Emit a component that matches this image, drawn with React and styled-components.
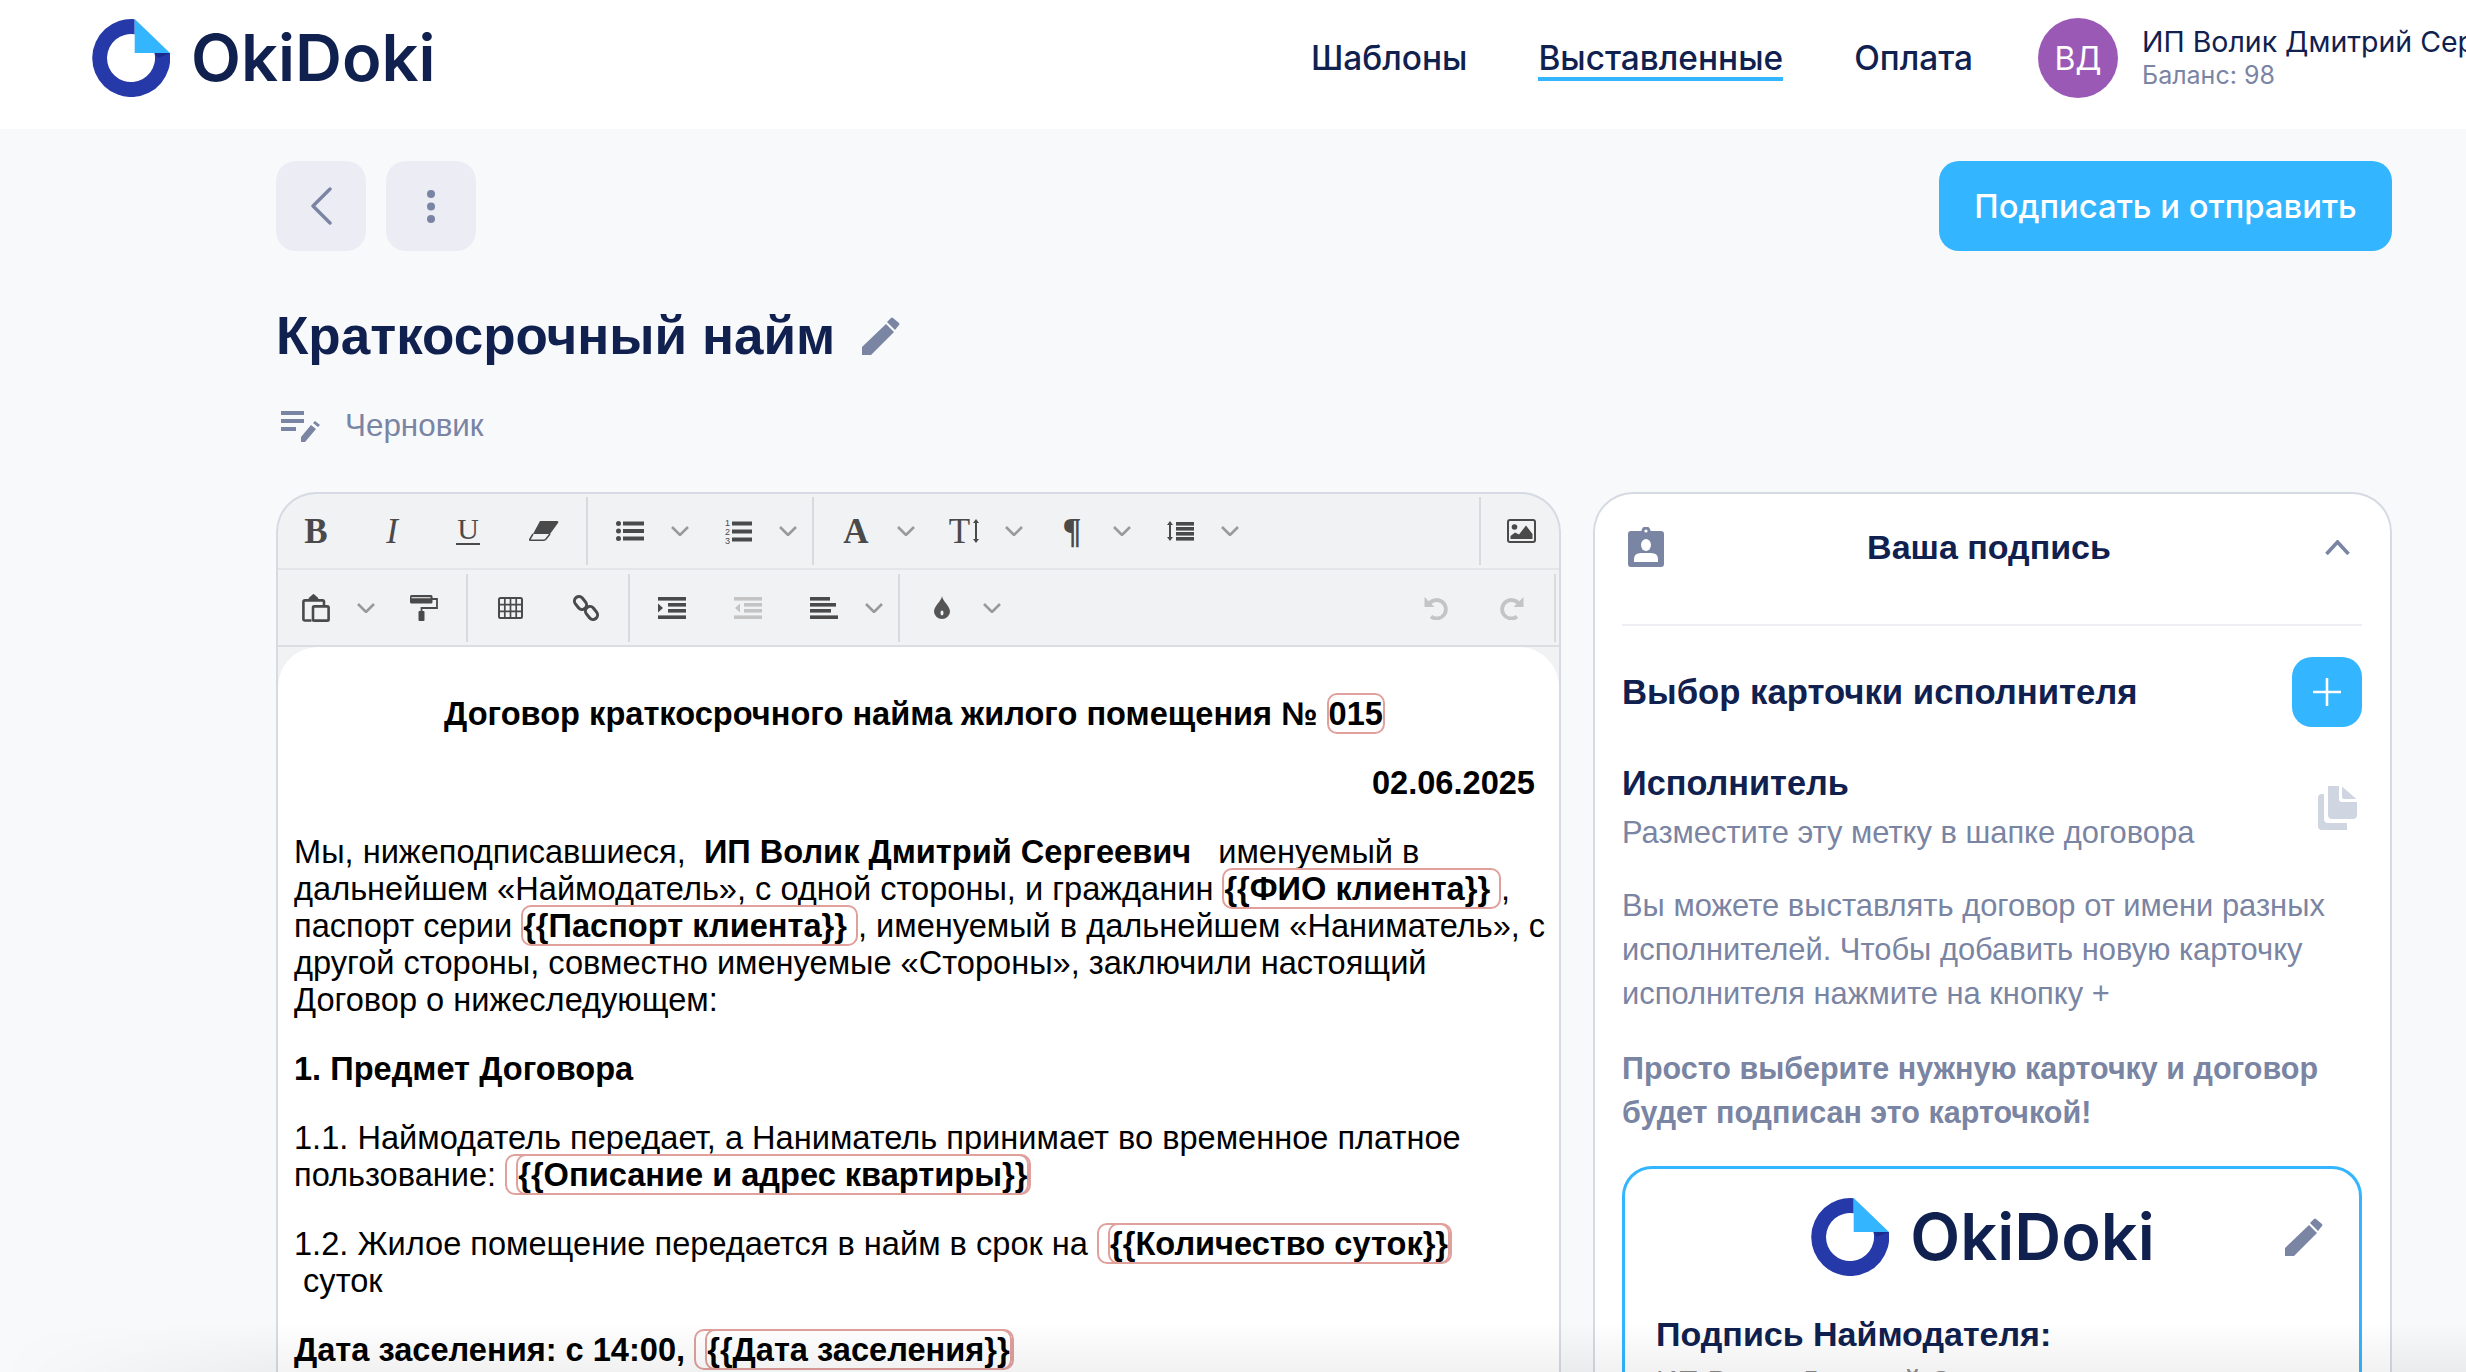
import React from 'react'
import styled, { createGlobalStyle } from 'styled-components'

const navy = '#10214f'
const slate = '#7a84a3'
const sky = '#33b5ff'
const ink = '#4a4a4a'
const faded = '#c4c4c4'

const GlobalStyle = createGlobalStyle`
  html, body {
    margin: 0;
    height: 100%;
    overflow: hidden;
    background: #f8f9fb;
    font-family: 'Liberation Sans', Arial, sans-serif;
  }
`

const Page = styled.div`
  height: 1372px;
  overflow: hidden;
`

const BottomFade = styled.div`
  position: fixed;
  left: 0;
  right: 0;
  bottom: 0;
  height: 50px;
  pointer-events: none;
  background: linear-gradient(to bottom, rgba(0, 0, 0, 0), rgba(0, 0, 0, 0.055));
  mask-image: linear-gradient(to right, transparent, black 340px);
`

const Header = styled.header`
  height: 129px;
  box-sizing: border-box;
  padding: 0 0 13px 92px;
  background: #fff;
  display: flex;
  align-items: center;
  overflow: hidden;
`

const Brand = styled.div`
  display: flex;
  align-items: center;
  gap: 21px;
`

const BrandName = styled.span`
  font-family: Inter, sans-serif;
  font-weight: 600;
  font-size: 65px;
  line-height: 78px;
  color: ${navy};
`

const Nav = styled.nav`
  margin-left: auto;
  margin-right: 65px;
  display: flex;
  gap: 71px;
`

const NavLink = styled.a`
  padding-top: 4px;
  font-family: Inter, sans-serif;
  font-weight: 500;
  font-size: 33.4px;
  line-height: 38px;
  color: ${navy};
  border-bottom: 4px solid ${(p) => (p.$active ? sky : 'transparent')};
`

const User = styled.div`
  flex: 0 0 428px;
  display: flex;
  align-items: center;
  gap: 24px;
  white-space: nowrap;
  overflow: hidden;
`

const Avatar = styled.div`
  flex: 0 0 80px;
  height: 80px;
  border-radius: 50%;
  background: #9b59b6;
  color: #fff;
  font-family: Inter, sans-serif;
  font-size: 32px;
  display: flex;
  align-items: center;
  justify-content: center;
`

const UserName = styled.div`
  font-family: Inter, sans-serif;
  font-size: 28.5px;
  line-height: 34px;
  color: ${navy};
`

const Balance = styled.div`
  font-family: Inter, sans-serif;
  font-size: 25px;
  line-height: 32px;
  color: ${slate};
`

const Main = styled.main`
  padding: 32px 74px 0 276px;
`

const TopBar = styled.div`
  display: flex;
  justify-content: space-between;
`

const IconGroup = styled.div`
  display: flex;
  gap: 20px;
`

const SquareButton = styled.button`
  width: 90px;
  height: 90px;
  border: 0;
  border-radius: 20px;
  background: #ecedf4;
  display: flex;
  align-items: center;
  justify-content: center;
`

const PrimaryButton = styled.button`
  width: 453px;
  height: 90px;
  border: 0;
  border-radius: 20px;
  background: ${sky};
  color: #fff;
  font-family: Inter, sans-serif;
  font-weight: 500;
  font-size: 32.8px;
`

const TitleRow = styled.div`
  margin-top: 54px;
  display: flex;
  align-items: center;
  gap: 27px;
`

const Title = styled.h1`
  margin: 0;
  font-size: 53px;
  line-height: 62px;
  font-weight: 700;
  color: ${navy};
`

const Status = styled.div`
  margin-top: 39px;
  padding-left: 5px;
  display: flex;
  align-items: center;
  gap: 25px;
  font-size: 31.4px;
  line-height: 40px;
  color: ${slate};
`

const Columns = styled.div`
  margin-top: 46px;
  display: grid;
  grid-template-columns: 1285px 799px;
  gap: 32px;
  align-items: start;
`

const Editor = styled.section`
  border: 2px solid #d5dae3;
  border-bottom: 0;
  border-radius: 40px 40px 0 0;
  background: #f1f2f4;
  overflow: hidden;
  height: 900px;
`

const ToolRow = styled.div`
  height: ${(p) => p.$height}px;
  display: flex;
  align-items: center;
  border-bottom: 2px solid ${(p) => p.$line};
`

const ToolGroup = styled.div`
  height: 68px;
  display: flex;
  align-items: center;
  padding: 0 4px;
  border-right: 2px solid #d9dadd;
  &:first-child {
    padding-left: 0;
  }
`

const PlainGroup = styled.div`
  display: flex;
  align-items: center;
  padding-left: 4px;
`

const EndGroup = styled.div`
  height: 68px;
  margin-left: auto;
  margin-right: ${(p) => p.$right}px;
  display: flex;
  align-items: center;
  padding: ${(p) => p.$padding};
  border-${(p) => p.$side}: 2px solid #d9dadd;
`

const Tool = styled.span`
  flex: 0 0 76px;
  height: 60px;
  display: flex;
  align-items: center;
  justify-content: center;
  gap: 3px;
  color: ${ink};
  font-family: 'Liberation Serif', serif;
  font-size: 35px;
  line-height: 1;
  font-weight: ${(p) => (p.$bold ? 700 : 400)};
  font-style: ${(p) => (p.$italic ? 'italic' : 'normal')};
`

const UnderlinedGlyph = styled.span`
  display: block;
  width: 24px;
  text-align: center;
  font-size: 30px;
  line-height: 24px;
  padding-bottom: 2px;
  border-bottom: 2px solid ${ink};
`

const Caret = styled.span`
  flex: 0 0 24px;
  margin-right: 8px;
  display: flex;
  align-items: center;
  justify-content: center;
`

const Sheet = styled.div`
  background: #fff;
  border-radius: 40px 40px 0 0;
  padding: 16px 12px 0 16px;
  height: 800px;
  color: #000;
  font-size: 32.6px;
  line-height: 37px;
`

const Para = styled.p`
  margin: 32px 0;
  padding-right: ${(p) => p.$inset || 0}px;
  text-align: ${(p) => p.$align || 'left'};
  font-weight: ${(p) => (p.$bold ? 700 : 400)};
`

const Tag = styled.span`
  font-weight: 700;
  border: 2px solid #e0a09c;
  border-radius: 10px;
`

const Panel = styled.aside`
  border: 2px solid #d5dae3;
  border-bottom: 0;
  border-radius: 40px 40px 0 0;
  background: #fff;
  padding: 0 28px 0 27px;
  height: 900px;
`

const PanelHead = styled.div`
  height: 132px;
  box-sizing: border-box;
  padding: 0 12px 24px 6px;
  border-bottom: 2px solid #eeeff4;
  display: grid;
  grid-template-columns: 40px 1fr 40px;
  align-items: center;
`

const PanelTitle = styled.h2`
  margin: 0;
  font-size: 34px;
  text-align: center;
  color: ${navy};
`

const ChevronCell = styled.div`
  display: flex;
  justify-content: flex-end;
`

const PickRow = styled.div`
  margin-top: 31px;
  display: flex;
  align-items: center;
  justify-content: space-between;
`

const SectionTitle = styled.h3`
  margin: 0;
  font-size: ${(p) => p.$size}px;
  line-height: 44px;
  font-weight: 700;
  color: ${navy};
`

const PlusButton = styled.button`
  width: 70px;
  height: 70px;
  padding: 0;
  border: 0;
  border-radius: 20px;
  background: ${sky};
  display: flex;
  align-items: center;
  justify-content: center;
`

const ExecRow = styled.div`
  margin-top: 34px;
  padding-right: 5px;
  display: flex;
  align-items: center;
  justify-content: space-between;
`

const Hint = styled.p`
  margin: ${(p) => p.$margin};
  font-size: ${(p) => (p.$bold ? 30.5 : 30.9)}px;
  line-height: 44px;
  font-weight: ${(p) => (p.$bold ? 700 : 400)};
  color: ${slate};
`

const Card = styled.div`
  margin-top: 32px;
  border: 3px solid ${sky};
  border-bottom: 0;
  border-radius: 30px 30px 0 0;
  padding: 29px 0 0;
  height: 400px;
`

const CardTop = styled.div`
  padding: 0 36px 0 18px;
  display: grid;
  grid-template-columns: 1fr auto 1fr;
  align-items: center;
`

const CardEdit = styled.div`
  display: flex;
  justify-content: flex-end;
`

const CardBody = styled.div`
  margin-top: 38px;
  padding-left: 31px;
`

const SignTitle = styled.h3`
  margin: 0;
  font-size: 34px;
  line-height: 40px;
  color: ${navy};
`

const SignName = styled.div`
  margin-top: 7px;
  font-size: 30px;
  line-height: 40px;
  color: #8a8a8a;
`

const LogoMark = () => (
  <svg width="78" height="78" viewBox="0 0 78 78">
    <path d="M42.7 0.2A39 39 0 1 0 77.9 34L62.5 34A24 24 0 1 1 42.7 15.3Z" fill="#2639a8" />
    <path d="M62.5 34H78L66 39Z" fill="#1c2c8c" />
    <path d="M42.7 0L78 34H42.7Z" fill={sky} />
  </svg>
)

const Logo = () => (
  <Brand>
    <LogoMark />
    <BrandName>OkiDoki</BrandName>
  </Brand>
)

const Pencil = ({ size = 38 }) => (
  <svg width={size} height={size} viewBox="0 0 38 38" fill={slate}>
    <path d="M0 38V30L24 7L32 15L9 38Z" />
    <path d="M25 5L29 1Q30 0 31 1L37 6Q38 7 37 8L33 13Z" />
  </svg>
)

const Chevron = ({ up }) => (
  <svg width="18" height="10" viewBox="0 0 18 10" fill="none" stroke="#9a9a9a" strokeWidth="2.6">
    <path d={up ? 'M1 9L9 1L17 9' : 'M1 1L9 9L17 1'} />
  </svg>
)

const BackIcon = () => (
  <svg width="22" height="38" viewBox="0 0 22 38" fill="none" stroke={slate} strokeWidth="3.4" strokeLinecap="round" strokeLinejoin="round">
    <path d="M20 2L3 19L20 36" />
  </svg>
)

const DotsIcon = () => (
  <svg width="8" height="33" viewBox="0 0 8 33" fill={slate}>
    <circle cx="4" cy="4" r="4" />
    <circle cx="4" cy="16.5" r="4" />
    <circle cx="4" cy="29" r="4" />
  </svg>
)

const DraftIcon = () => (
  <svg width="39" height="32" viewBox="0 0 39 32" fill={slate}>
    <rect x="0" y="1" width="23" height="4" />
    <rect x="0" y="9" width="23" height="4" />
    <rect x="0" y="17" width="15" height="4" />
    <path d="M20 32V27L30 15L35 19L24 32Z" />
    <path d="M32 13L34 11L39 15L37 17Z" />
  </svg>
)

const Eraser = () => (
  <svg width="30" height="20" viewBox="0 0 30 20">
    <path d="M11 0H28Q30 0 29 2L21 13H4Z" fill={ink} />
    <path d="M4 13L1 18Q0 19.2 2 19.2H15Q16 19.2 17 18L21 13" fill="none" stroke={ink} strokeWidth="1.5" />
  </svg>
)

const ListIcon = () => (
  <svg width="28" height="20" viewBox="0 0 28 20" fill={ink}>
    <circle cx="2.5" cy="2.5" r="2.5" />
    <circle cx="2.5" cy="10" r="2.5" />
    <circle cx="2.5" cy="17.5" r="2.5" />
    <rect x="7" y="0.5" width="21" height="4" />
    <rect x="7" y="8" width="21" height="4" />
    <rect x="7" y="15.5" width="21" height="4" />
  </svg>
)

const OrderedIcon = () => (
  <svg width="27" height="27" viewBox="0 0 27 27" fill={ink}>
    <text x="0" y="8" fontSize="9" fontFamily="Liberation Sans, sans-serif">1</text>
    <text x="0" y="17" fontSize="9" fontFamily="Liberation Sans, sans-serif">2</text>
    <text x="0" y="26" fontSize="9" fontFamily="Liberation Sans, sans-serif">3</text>
    <rect x="7" y="3.5" width="20" height="4" />
    <rect x="7" y="11.5" width="20" height="4" />
    <rect x="7" y="19.5" width="20" height="4" />
  </svg>
)

const HeightArrow = () => (
  <svg width="6" height="24" viewBox="0 0 6 24" fill={ink}>
    <path d="M3 0L6 4H4V20H6L3 24L0 20H2V4H0Z" />
  </svg>
)

const LineHeightIcon = () => (
  <svg width="27" height="20" viewBox="0 0 27 20" fill={ink}>
    <path d="M3 0L6 4H4V16H6L3 20L0 16H2V4H0Z" />
    <rect x="9" y="1" width="18" height="3.6" />
    <rect x="9" y="6" width="18" height="3.6" />
    <rect x="9" y="11" width="18" height="3.6" />
    <rect x="9" y="16" width="18" height="3.6" />
  </svg>
)

const ImageIcon = () => (
  <svg width="29" height="24" viewBox="0 0 29 24">
    <rect x="1" y="1" width="27" height="22" rx="2" fill="none" stroke={ink} strokeWidth="2" />
    <circle cx="7.5" cy="8" r="2.8" fill={ink} />
    <path d="M3.5 20V17L8 13.5L12 15.5L19 6.5L25.5 15V20Z" fill={ink} />
  </svg>
)

const PasteIcon = () => (
  <svg width="28" height="28" viewBox="0 0 28 28" fill="none" stroke={ink} strokeWidth="2.6">
    <path d="M9.5 26.5H3Q1.4 26.5 1.4 25V8Q1.4 6.4 3 6.4H20.5Q22 6.4 22 8V12" />
    <path d="M8 6V4.5L11.5 1.5L15 4.5V6" fill={ink} />
    <rect x="11" y="12.4" width="15.6" height="14.2" rx="1.2" />
  </svg>
)

const RollerIcon = () => (
  <svg width="28" height="26" viewBox="0 0 28 26">
    <rect x="0" y="0" width="22.5" height="8.5" rx="1.5" fill={ink} />
    <rect x="1.5" y="2" width="19" height="1.3" fill="#cfcfcf" />
    <path d="M22 4H27V13H11.5V17" fill="none" stroke={ink} strokeWidth="1.8" />
    <rect x="8.5" y="16" width="6" height="10" rx="1" fill={ink} />
  </svg>
)

const TableIcon = () => (
  <svg width="25" height="22" viewBox="0 0 25 22" fill="none" stroke={ink} strokeWidth="1.7">
    <rect x="1" y="1" width="23" height="20" rx="1.5" strokeWidth="2" />
    <path d="M6.8 1V21M12.5 1V21M18.2 1V21M1 7.6H24M1 14.3H24" />
  </svg>
)

const LinkIcon = () => (
  <svg width="26" height="26" viewBox="0 0 26 26" fill="none" stroke={ink} strokeWidth="3">
    <rect x="0.5" y="3.5" width="14" height="9" rx="4.5" transform="rotate(52 7.5 8)" />
    <rect x="11.5" y="13.5" width="14" height="9" rx="4.5" transform="rotate(52 18.5 18)" />
  </svg>
)

const IndentIcon = ({ out }) => (
  <svg width="28" height="22" viewBox="0 0 28 22" fill={out ? faded : ink}>
    <rect x="0" y="0" width="28" height="3.6" />
    <rect x="10" y="6" width="18" height="3.6" />
    <rect x="10" y="12" width="18" height="3.6" />
    <rect x="0" y="18.4" width="28" height="3.6" />
    <path d={out ? 'M1 11L6 6.5V15.5Z' : 'M5 11L0 6.5V15.5Z'} />
  </svg>
)

const AlignIcon = () => (
  <svg width="28" height="22" viewBox="0 0 28 22" fill={ink}>
    <rect x="0" y="0" width="20" height="3.6" />
    <rect x="0" y="6" width="26" height="3.6" />
    <rect x="0" y="12" width="21" height="3.6" />
    <rect x="0" y="18.4" width="28" height="3.6" />
  </svg>
)

const DropIcon = () => (
  <svg width="16" height="23" viewBox="0 0 16 23">
    <path d="M8 0C8.5 5 16 10 16 15.5A8 7.5 0 0 1 0 15.5C0 10 7.5 5 8 0Z" fill="#555" />
    <ellipse cx="8" cy="17" rx="1.5" ry="2.4" fill="#f1f2f4" />
  </svg>
)

const UndoIcon = ({ redo }) => (
  <svg width="24" height="24" viewBox="0 0 24 24" transform={redo ? 'scale(-1 1)' : undefined}>
    <path d="M4.5 9A9.2 9.2 0 1 1 7 20.5" fill="none" stroke={faded} strokeWidth="3.8" />
    <path d="M0.5 1V11H10.5Z" fill={faded} />
  </svg>
)

const BadgeIcon = () => (
  <svg width="36" height="40" viewBox="0 0 36 40">
    <path d="M3 4H13.5A4.5 4.5 0 0 1 22.5 4H33Q36 4 36 7V37Q36 40 33 40H3Q0 40 0 37V7Q0 4 3 4Z" fill={slate} />
    <circle cx="18" cy="4" r="1.6" fill="#fff" />
    <ellipse cx="18" cy="18" rx="5" ry="6" fill="#fff" />
    <path d="M6 35V32Q6 26 13 26H23Q30 26 30 32V35Z" fill="#fff" />
  </svg>
)

const CopyIcon = () => (
  <svg width="39" height="44" viewBox="0 0 39 44" fill="#d0d6e1">
    <path d="M10 0H21V13Q21 16 24 16H39V29Q39 33 35 33H14Q10 33 10 29Z" />
    <path d="M24 0.5L38.5 13H26Q24 13 24 11Z" />
    <path d="M6 8V33Q6 37 10 37H29V44H4Q0 44 0 40V12Q0 8 4 8Z" />
  </svg>
)

const PlusIcon = () => (
  <svg width="28" height="28" viewBox="0 0 28 28" fill="none" stroke="#fff" strokeWidth="2.6">
    <path d="M14 0V28M0 14H28" />
  </svg>
)

const App = () => (
  <Page>
    <GlobalStyle />
    <Header>
      <Logo />
      <Nav>
        <NavLink>Шаблоны</NavLink>
        <NavLink $active>Выставленные</NavLink>
        <NavLink>Оплата</NavLink>
      </Nav>
      <User>
        <Avatar>ВД</Avatar>
        <div>
          <UserName>ИП Волик Дмитрий Сергеевич</UserName>
          <Balance>Баланс: 98</Balance>
        </div>
      </User>
    </Header>

    <Main>
      <TopBar>
        <IconGroup>
          <SquareButton><BackIcon /></SquareButton>
          <SquareButton><DotsIcon /></SquareButton>
        </IconGroup>
        <PrimaryButton>Подписать и отправить</PrimaryButton>
      </TopBar>

      <TitleRow>
        <Title>Краткосрочный найм</Title>
        <Pencil />
      </TitleRow>

      <Status>
        <DraftIcon />
        Черновик
      </Status>

      <Columns>
        <Editor>
          <ToolRow $height={74} $line="#e4e5e9">
            <ToolGroup>
              <Tool $bold>B</Tool>
              <Tool $italic>I</Tool>
              <Tool><UnderlinedGlyph>U</UnderlinedGlyph></Tool>
              <Tool><Eraser /></Tool>
            </ToolGroup>
            <ToolGroup>
              <Tool><ListIcon /></Tool>
              <Caret><Chevron /></Caret>
              <Tool><OrderedIcon /></Tool>
              <Caret><Chevron /></Caret>
            </ToolGroup>
            <PlainGroup>
              <Tool $bold>A</Tool>
              <Caret><Chevron /></Caret>
              <Tool>T<HeightArrow /></Tool>
              <Caret><Chevron /></Caret>
              <Tool $bold>¶</Tool>
              <Caret><Chevron /></Caret>
              <Tool><LineHeightIcon /></Tool>
              <Caret><Chevron /></Caret>
            </PlainGroup>
            <EndGroup $right={0} $side="left" $padding="0 0 0 2px">
              <Tool><ImageIcon /></Tool>
            </EndGroup>
          </ToolRow>
          <ToolRow $height={75} $line="#dcdde1">
            <ToolGroup>
              <Tool><PasteIcon /></Tool>
              <Caret><Chevron /></Caret>
              <Tool><RollerIcon /></Tool>
            </ToolGroup>
            <ToolGroup>
              <Tool><TableIcon /></Tool>
              <Tool><LinkIcon /></Tool>
            </ToolGroup>
            <ToolGroup>
              <Tool><IndentIcon /></Tool>
              <Tool><IndentIcon out /></Tool>
              <Tool><AlignIcon /></Tool>
              <Caret><Chevron /></Caret>
            </ToolGroup>
            <PlainGroup>
              <Tool><DropIcon /></Tool>
              <Caret><Chevron /></Caret>
            </PlainGroup>
            <EndGroup $right={3} $side="right" $padding="0 4px 0 0">
              <Tool><UndoIcon /></Tool>
              <Tool><UndoIcon redo /></Tool>
            </EndGroup>
          </ToolRow>
          <Sheet>
            <Para $align="center" $bold $inset={12}>
              Договор краткосрочного найма жилого помещения № <Tag>015</Tag>
            </Para>
            <Para $align="right" $bold $inset={12}>02.06.2025</Para>
            <Para>
              Мы, нижеподписавшиеся,&nbsp; <b>ИП Волик Дмитрий Сергеевич</b> &nbsp; именуемый в дальнейшем
              «Наймодатель», с одной стороны, и гражданин <Tag>{'{{ФИО клиента}} '}</Tag>, паспорт серии{' '}
              <Tag>{'{{Паспорт клиента}} '}</Tag>, именуемый в дальнейшем «Наниматель», с другой стороны,
              совместно именуемые «Стороны», заключили настоящий Договор о нижеследующем:
            </Para>
            <Para $bold>1. Предмет Договора</Para>
            <Para>
              1.1. Наймодатель передает, а Наниматель принимает во временное платное пользование:{' '}
              <Tag>&nbsp;<Tag>{'{{Описание и адрес квартиры}}'}</Tag></Tag>
            </Para>
            <Para>
              1.2. Жилое помещение передается в найм в срок на{' '}
              <Tag>&nbsp;<Tag>{'{{Количество суток}}'}</Tag></Tag>
              <br />
              &nbsp;суток
            </Para>
            <Para $bold>
              Дата заселения: с 14:00, <Tag>&nbsp;<Tag>{'{{Дата заселения}}'}</Tag></Tag>
            </Para>
          </Sheet>
        </Editor>

        <Panel>
          <PanelHead>
            <BadgeIcon />
            <PanelTitle>Ваша подпись</PanelTitle>
            <ChevronCell>
              <svg width="25" height="15" viewBox="0 0 25 15" fill="none" stroke={slate} strokeWidth="3.6">
                <path d="M1.5 14L12.5 2L23.5 14" />
              </svg>
            </ChevronCell>
          </PanelHead>

          <PickRow>
            <SectionTitle $size={34.7}>Выбор карточки исполнителя</SectionTitle>
            <PlusButton><PlusIcon /></PlusButton>
          </PickRow>

          <ExecRow>
            <div>
              <SectionTitle $size={34.3}>Исполнитель</SectionTitle>
              <Hint $margin="6px 0 0">Разместите эту метку в шапке договора</Hint>
            </div>
            <CopyIcon />
          </ExecRow>

          <Hint $margin="29px 0 0">
            Вы можете выставлять договор от имени разных исполнителей. Чтобы добавить новую карточку
            исполнителя нажмите на кнопку +
          </Hint>
          <Hint $margin="30px 0 0" $bold>
            Просто выберите нужную карточку и договор будет подписан это карточкой!
          </Hint>

          <Card>
            <CardTop>
              <span />
              <Logo />
              <CardEdit><Pencil /></CardEdit>
            </CardTop>
            <CardBody>
              <SignTitle>Подпись Наймодателя:</SignTitle>
              <SignName>ИП Волик Дмитрий Сергеевич</SignName>
            </CardBody>
          </Card>
        </Panel>
      </Columns>
    </Main>
    <BottomFade />
  </Page>
)

export default App
